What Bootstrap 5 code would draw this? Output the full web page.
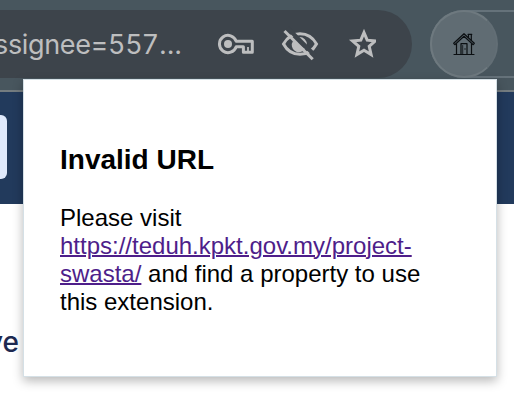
<!DOCTYPE html>
<html lang="en">
<head>
<meta charset="utf-8">
<meta name="viewport" content="width=device-width, initial-scale=1">
<title>Invalid URL</title>
<link href="https://cdn.jsdelivr.net/npm/bootstrap@5.3.0/dist/css/bootstrap.min.css" rel="stylesheet">
<style>
  body { height: 406px; font-family: "Liberation Sans", Arial, sans-serif; color: #000; }
  .toolbar { height: 92px; padding-top: 10px; gap: 18px; background: #48565e; border-bottom: 2px solid #747c80; }
  .omnibox { width: 412px; height: 68px; background: #3d444b; border-radius: 0 34px 34px 0; color: #bdbebf; }
  .address { width: 182px; padding-top: 1px; font: 400 27px/36px Inter, sans-serif; letter-spacing: -.35px; }
  .address-id { letter-spacing: .9px; }
  .address-more { letter-spacing: -.1px; }
  .tool-icons { width: 194px; height: 68px; }
  .extensions { width: 120px; height: 68px; border: 2px solid #65727a; border-radius: 34px; }
  .ext-button { width: 68px; height: 68px; margin: -2px; background: #606c73; border: 2px solid #6e797f; border-right-color: #626e75; }
  .site-header { height: 112px; padding-top: 23px; background: #223a5c; }
  .site-field { width: 7px; height: 64px; background: #e0eafc; border-radius: 0 6px 6px 0; }
  .page-word { width: 19px; margin-top: 121px; font: 500 28px/34px Inter, sans-serif; color: #1d2950; }
  .popup { left: 23px; top: 79px; width: 474px; height: 298px; padding: 64px 60px 0 36px; border: 1px solid #d5e0e6; box-shadow: 0 4px 10px rgba(0,0,0,.28); }
  .popup h1 { font-size: 28px; line-height: 32px; margin-bottom: 28px; }
  .popup p { font-size: 24px; line-height: 28px; }
  .popup a { color: #4e1e8a; text-decoration-thickness: 2px; }
</style>
<script src="https://cdn.jsdelivr.net/npm/bootstrap@5.3.0/dist/js/bootstrap.bundle.min.js"></script>
</head>
<body class="position-relative overflow-hidden bg-white">
  <header class="toolbar d-flex align-items-start overflow-hidden">
    <div class="omnibox d-flex align-items-center flex-shrink-0">
      <div class="address d-flex justify-content-end overflow-hidden text-nowrap flex-shrink-0"><span>ssignee=<span class="address-id">557</span><span class="address-more">...</span></span></div>
      <svg class="tool-icons" viewBox="182 10 194 68" fill="none" stroke="#bdbebf" stroke-width="3">
        <g stroke-linejoin="round">
          <path d="M236.2 41.3H252.3V52.3H243.4V46.7H236.2A8.6 8.6 0 1 1 236.2 41.3Z"/>
          <circle cx="228" cy="44" r="4" fill="#bdbebf" stroke="none"/>
          <path d="M248 47V52" stroke-width="1.8"/>
        </g>
        <path d="M283.500 44C287 37.500 293 33.700 300 33.700S313 37.500 316.500 44C313 50.500 307 54.300 300 54.300S287 50.500 283.500 44Z"/>
        <path d="M293 41A7 7 0 0 0 305 49Z" fill="#bdbebf" stroke="none"/>
        <path d="M299 38.500A6 6 0 0 1 305.500 45"/>
        <path d="M287.500 28L315.500 56" stroke="#3d444b" stroke-width="4"/>
        <path d="M284.500 31L312.700 59.200"/>
        <path d="M364 32.600L367.200 40.200L375.400 40.900L369.200 46.300L371.100 54.600L364 50.200L356.900 54.600L358.800 46.300L352.600 40.900L360.800 40.200Z"/>
      </svg>
    </div>
    <div class="extensions flex-shrink-0">
      <div class="ext-button rounded-circle d-flex align-items-center justify-content-center">
        <svg width="24" height="24" viewBox="452 32 24 24" fill="none" stroke="#0b0f12" stroke-width="1.2" stroke-linejoin="round" stroke-linecap="round">
          <path d="M453.700 43.300L464 33.700L474.300 43.300L473.200 44.700L464 36.300L454.800 44.700Z"/>
          <path d="M468.500 37.200V34.500H471.300V39.800M468 34.300H471.800"/>
          <path d="M456.500 44V54.300M471.500 44V54.300M454 54.500H474M461 54V43.700H467V54"/>
          <path d="M462.700 54V45.500M465 48.500V49.500" stroke-width=".8"/>
        </svg>
      </div>
    </div>
  </header>
  <div class="site-header"><div class="site-field"></div></div>
  <div class="page-word d-flex justify-content-end overflow-hidden"><span>ve</span></div>
  <main class="popup position-absolute bg-white">
    <h1 class="fw-bold">Invalid URL</h1>
    <p class="mb-0">Please visit <a href="https://teduh.kpkt.gov.my/project-swasta/">https://teduh.kpkt.gov.my/project-swasta/</a> and find a property to use this extension.</p>
  </main>
</body>
</html>
